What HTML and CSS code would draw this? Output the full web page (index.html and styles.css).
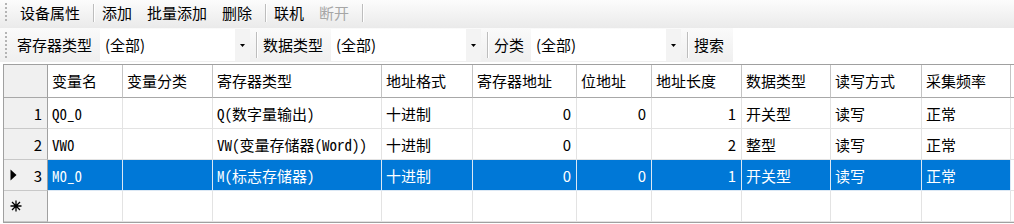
FILE: index.html
```html
<!DOCTYPE html>
<html lang="zh-CN">
<head>
<meta charset="utf-8">
<title>变量列表</title>
<link rel="stylesheet" href="styles.css">
</head>
<body>
<div class="toolbar tb1">
  <span class="grip"></span>
  <span class="btn first">设备属性</span>
  <span class="sep"></span>
  <span class="btn">添加</span>
  <span class="btn">批量添加</span>
  <span class="btn">删除</span>
  <span class="sep"></span>
  <span class="btn">联机</span>
  <span class="btn disabled">断开</span>
  <span class="sep"></span>
</div>
<div class="toolbar tb2">
  <span class="grip"></span>
  <span class="label first">寄存器类型</span>
  <span class="combo"><span class="val">(全部)</span><span class="drop"><svg width="5" height="3" viewBox="0 0 5 3"><path d="M0 0h5L2.5 3z" fill="#000"/></svg></span></span>
  <span class="sep"></span>
  <span class="label">数据类型</span>
  <span class="combo"><span class="val">(全部)</span><span class="drop"><svg width="5" height="3" viewBox="0 0 5 3"><path d="M0 0h5L2.5 3z" fill="#000"/></svg></span></span>
  <span class="sep"></span>
  <span class="label">分类</span>
  <span class="combo short"><span class="val">(全部)</span><span class="drop"><svg width="5" height="3" viewBox="0 0 5 3"><path d="M0 0h5L2.5 3z" fill="#000"/></svg></span></span>
  <span class="sep"></span>
  <span class="label last">搜索</span>
</div>
<div class="grid">
  <div class="c rh corner"></div>
  <div class="c h">变量名</div>
  <div class="c h">变量分类</div>
  <div class="c h">寄存器类型</div>
  <div class="c h">地址格式</div>
  <div class="c h">寄存器地址</div>
  <div class="c h">位地址</div>
  <div class="c h">地址长度</div>
  <div class="c h">数据类型</div>
  <div class="c h">读写方式</div>
  <div class="c h">采集频率</div>
  <div class="c h tail"></div>

  <div class="c rh"><span></span><span>1</span></div>
  <div class="c mono">Q0_0</div>
  <div class="c"></div>
  <div class="c mono">Q(数字量输出)</div>
  <div class="c">十进制</div>
  <div class="c num">0</div>
  <div class="c num">0</div>
  <div class="c num">1</div>
  <div class="c">开关型</div>
  <div class="c">读写</div>
  <div class="c">正常</div>
  <div class="c tail"></div>

  <div class="c rh"><span></span><span>2</span></div>
  <div class="c mono">VW0</div>
  <div class="c"></div>
  <div class="c mono">VW(变量存储器(Word))</div>
  <div class="c">十进制</div>
  <div class="c num">0</div>
  <div class="c num"></div>
  <div class="c num">2</div>
  <div class="c">整型</div>
  <div class="c">读写</div>
  <div class="c">正常</div>
  <div class="c tail"></div>

  <div class="c rh"><svg width="7" height="12" viewBox="0 0 7 12"><path d="M0.5 0.5L6.5 6L0.5 11.5z" fill="#000"/></svg><span>3</span></div>
  <div class="c sel mono">M0_0</div>
  <div class="c sel"></div>
  <div class="c sel mono">M(标志存储器)</div>
  <div class="c sel">十进制</div>
  <div class="c sel num">0</div>
  <div class="c sel num">0</div>
  <div class="c sel num">1</div>
  <div class="c sel">开关型</div>
  <div class="c sel">读写</div>
  <div class="c sel">正常</div>
  <div class="c tail"></div>

  <div class="c rh"><svg width="12" height="12" viewBox="0 0 12 12"><g stroke="#000" stroke-width="1.3"><path d="M6 0.5v11M0.5 6h11M2 2l8 8M10 2l-8 8"/></g></svg><span></span></div>
  <div class="c"></div>
  <div class="c"></div>
  <div class="c"></div>
  <div class="c"></div>
  <div class="c"></div>
  <div class="c"></div>
  <div class="c"></div>
  <div class="c"></div>
  <div class="c"></div>
  <div class="c"></div>
  <div class="c tail"></div>
</div>
</body>
</html>
```

FILE: styles.css
```css
* { box-sizing: border-box; }
html, body {
  margin: 0;
  padding: 0;
  background: #ffffff;
  width: 1014px;
  height: 224px;
  overflow: hidden;
  font-family: "Noto Sans CJK SC", "Noto Sans", sans-serif;
  font-size: 15px;
  color: #000;
}

.toolbar {
  display: flex;
  align-items: center;
  white-space: nowrap;
}
.tb1 {
  height: 28px;
  padding-left: 5px;
  padding-bottom: 3px;
  background: linear-gradient(to bottom, #fcfcfc, #eaeaea);
}
.tb2 {
  width: 733px;
  height: 34px;
  padding-left: 5px;
  background: linear-gradient(to bottom, #fafafa, #efefef);
}

.grip {
  width: 2px;
  height: 20px;
  background: repeating-linear-gradient(to bottom, #b4b4b4 0 2px, transparent 2px 4px);
}
.tb2 .grip { height: 26px; }

.btn {
  padding: 0 7.5px;
  line-height: 22px;
}
.btn.first { margin-left: 5.5px; }
.btn.disabled { color: #a6a6a6; }

.sep {
  width: 1px;
  height: 18px;
  background: #bdbdbd;
  box-shadow: 1px 0 0 #ffffff;
  margin: 0 1px 0 5px;
}
.tb2 .sep {
  height: 26px;
  margin: 0 6px;
}

.label {
  line-height: 22px;
  padding-bottom: 1px;
}
.label.first { margin-left: 10px; }
.label.last { margin-left: 0; }

.combo {
  display: flex;
  align-items: center;
  width: 150px;
  height: 32px;
  margin-left: 8px;
  background: #ffffff;
}
.combo.short { margin-left: 7px; width: 150px; }
.combo .val {
  flex: 1;
  padding-left: 5px;
  padding-bottom: 1px;
}
.combo .drop {
  width: 15px;
  height: 32px;
  display: flex;
  align-items: center;
  justify-content: center;
  background: #f3f3f3;
}
.combo .drop svg { display: block; }

.grid {
  margin: 2px 0 0 3px;
  width: 1011px;
  display: grid;
  grid-template-columns: 44px 75px 90px 169px 91px 104px 75px 90px 89px 91px 89px 1fr;
  grid-template-rows: 33px repeat(4, 31px);
  border-top: 1px solid #a0a0a0;
  border-left: 1px solid #a0a0a0;
  border-bottom: 1px solid #a0a0a0;
}
.c {
  display: flex;
  align-items: center;
  padding: 0 4px;
  border-right: 1px solid #e3e3e3;
  border-bottom: 1px solid #e3e3e3;
  white-space: nowrap;
  overflow: hidden;
  background: #ffffff;
}
.c.mono {
  font-family: "Noto Sans Mono CJK SC", "Noto Sans CJK SC", "Liberation Mono", monospace;
}
.c.h {
  border-right: 1px solid #c4c4c4;
  border-bottom: 1px solid #a8a8a8;
  padding-bottom: 2px;
}
.c.num {
  justify-content: flex-end;
  padding-right: 5px;
}
.c.rh {
  background: #f0f0f0;
  border-right: 1px solid #a0a0a0;
  border-bottom: 1px solid #c8c8c8;
  justify-content: space-between;
  padding: 0 5px 0 6px;
}
.c.rh.corner {
  border-bottom: 1px solid #a8a8a8;
}
.c.rh svg { display: block; }
.c.sel {
  background: #0078d7;
  color: #ffffff;
  border-right: 1px solid #dce8f4;
  border-bottom: 1px solid #dce8f4;
}
.c.tail {
  border-right: none;
}
```
